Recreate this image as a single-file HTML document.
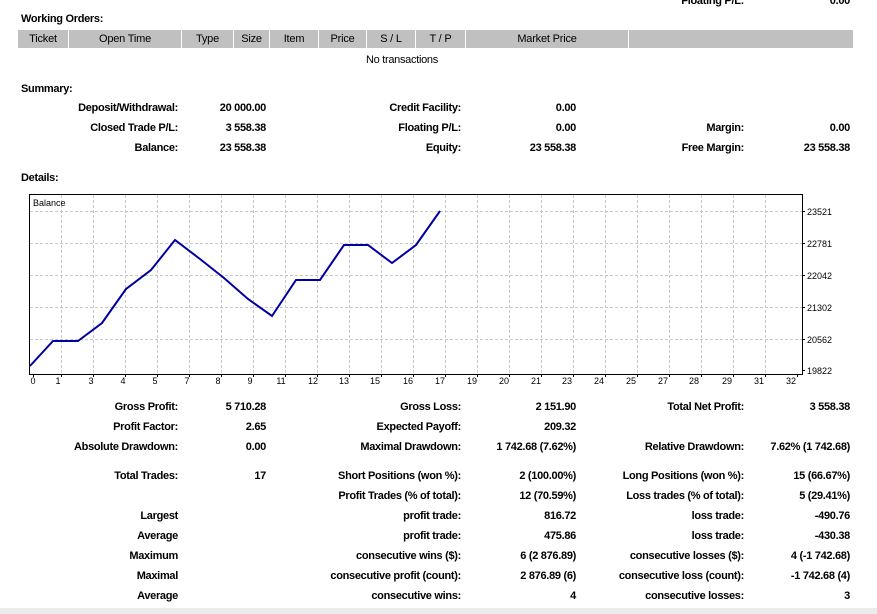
<!DOCTYPE html><html><head><style>
body{margin:0;width:877px;height:614px;background:#fff;position:relative;overflow:hidden;font-family:"Liberation Sans",Arial,sans-serif;font-size:11px;color:#000}
.t{position:absolute;white-space:nowrap;font-weight:bold;line-height:13px;letter-spacing:-0.3px;margin-top:1px}
.r{text-align:right}
.n{font-weight:normal}
.hdr{position:absolute;left:18px;top:30px;width:835px;height:18px;background:#c0c0c0}
.hdr div{position:absolute;top:0;height:18px;line-height:19px;font-size:11px;text-align:center;border-right:1px solid #fff;letter-spacing:-0.2px}
</style></head><body>
<div class="t r" style="right:133px;top:-6px">Floating P/L:</div><div class="t r" style="right:27px;top:-6px">0.00</div>
<div class="t" style="left:21px;top:12px">Working Orders:</div>
<div class="hdr">
<div style="left:0;width:50px">Ticket</div>
<div style="left:51px;width:112px">Open Time</div>
<div style="left:164px;width:51px">Type</div>
<div style="left:216px;width:35px">Size</div>
<div style="left:252px;width:48px">Item</div>
<div style="left:301px;width:47px">Price</div>
<div style="left:349px;width:48px">S / L</div>
<div style="left:398px;width:49px">T / P</div>
<div style="left:448px;width:162px">Market Price</div>
</div>
<div class="t n" style="left:366px;top:53px">No transactions</div>
<div class="t" style="left:21px;top:82px">Summary:</div>
<div class="t r" style="right:699px;top:101px">Deposit/Withdrawal:</div><div class="t r" style="right:611px;top:101px">20 000.00</div>
<div class="t r" style="right:416px;top:101px">Credit Facility:</div><div class="t r" style="right:301px;top:101px">0.00</div>
<div class="t r" style="right:699px;top:121px">Closed Trade P/L:</div><div class="t r" style="right:611px;top:121px">3 558.38</div>
<div class="t r" style="right:416px;top:121px">Floating P/L:</div><div class="t r" style="right:301px;top:121px">0.00</div>
<div class="t r" style="right:133px;top:121px">Margin:</div><div class="t r" style="right:27px;top:121px">0.00</div>
<div class="t r" style="right:699px;top:141px">Balance:</div><div class="t r" style="right:611px;top:141px">23 558.38</div>
<div class="t r" style="right:416px;top:141px">Equity:</div><div class="t r" style="right:301px;top:141px">23 558.38</div>
<div class="t r" style="right:133px;top:141px">Free Margin:</div><div class="t r" style="right:27px;top:141px">23 558.38</div>
<div class="t" style="left:21px;top:171px">Details:</div>
<svg style="position:absolute;left:0;top:0" width="877" height="392" font-family="Liberation Sans,Arial,sans-serif" font-size="9">
<g stroke="#c8c8c8" stroke-dasharray="3,2" stroke-width="1">
<line x1="30" y1="211.5" x2="802" y2="211.5"/><line x1="30" y1="243.5" x2="802" y2="243.5"/><line x1="30" y1="275.5" x2="802" y2="275.5"/><line x1="30" y1="307.5" x2="802" y2="307.5"/><line x1="30" y1="339.5" x2="802" y2="339.5"/>
<line x1="61.5" y1="195" x2="61.5" y2="374"/><line x1="93.5" y1="195" x2="93.5" y2="374"/><line x1="125.5" y1="195" x2="125.5" y2="374"/><line x1="157.5" y1="195" x2="157.5" y2="374"/><line x1="189.5" y1="195" x2="189.5" y2="374"/><line x1="221.5" y1="195" x2="221.5" y2="374"/><line x1="253.5" y1="195" x2="253.5" y2="374"/><line x1="285.5" y1="195" x2="285.5" y2="374"/><line x1="317.5" y1="195" x2="317.5" y2="374"/><line x1="349.5" y1="195" x2="349.5" y2="374"/><line x1="381.5" y1="195" x2="381.5" y2="374"/><line x1="413.5" y1="195" x2="413.5" y2="374"/><line x1="445.5" y1="195" x2="445.5" y2="374"/><line x1="477.5" y1="195" x2="477.5" y2="374"/><line x1="509.5" y1="195" x2="509.5" y2="374"/><line x1="541.5" y1="195" x2="541.5" y2="374"/><line x1="573.5" y1="195" x2="573.5" y2="374"/><line x1="605.5" y1="195" x2="605.5" y2="374"/><line x1="637.5" y1="195" x2="637.5" y2="374"/><line x1="669.5" y1="195" x2="669.5" y2="374"/><line x1="701.5" y1="195" x2="701.5" y2="374"/><line x1="733.5" y1="195" x2="733.5" y2="374"/><line x1="765.5" y1="195" x2="765.5" y2="374"/>
</g>
<rect x="29.5" y="194.5" width="773" height="180" fill="none" stroke="#000"/>
<g stroke="#000"><line x1="802" y1="211.5" x2="805" y2="211.5"/><line x1="802" y1="243.5" x2="805" y2="243.5"/><line x1="802" y1="275.5" x2="805" y2="275.5"/><line x1="802" y1="307.5" x2="805" y2="307.5"/><line x1="802" y1="339.5" x2="805" y2="339.5"/><line x1="802" y1="370.5" x2="805" y2="370.5"/></g>
<text x="33" y="206">Balance</text>
<polyline fill="none" stroke="#0000a0" stroke-width="2" points="30,366 53,341 78,341 102,323 126,289 151,270 175,240 200,259 224,278 248,299 272,316 296,280 320,280 344,245 368,245 392,263 416,245 440,211"/>
<g><text x="807" y="215">23521</text><text x="807" y="247">22781</text><text x="807" y="279">22042</text><text x="807" y="311">21302</text><text x="807" y="343">20562</text><text x="807" y="374">19822</text></g>
<g text-anchor="middle">
<text x="33" y="384">0</text><text x="58" y="384">1</text><text x="91" y="384">3</text><text x="123" y="384">4</text><text x="155" y="384">5</text><text x="187" y="384">7</text><text x="218" y="384">8</text><text x="250" y="384">9</text><text x="281" y="384">11</text><text x="313" y="384">12</text><text x="344" y="384">13</text><text x="375" y="384">15</text><text x="408" y="384">16</text><text x="440" y="384">17</text><text x="472" y="384">19</text><text x="504" y="384">20</text><text x="536" y="384">21</text><text x="567" y="384">23</text><text x="599" y="384">24</text><text x="631" y="384">25</text><text x="663" y="384">27</text><text x="694" y="384">28</text><text x="727" y="384">29</text><text x="759" y="384">31</text><text x="791" y="384">32</text>
</g>
<g stroke="#000"><line x1="33.5" y1="374" x2="33.5" y2="377"/><line x1="61.5" y1="374" x2="61.5" y2="377"/><line x1="93.5" y1="374" x2="93.5" y2="377"/><line x1="125.5" y1="374" x2="125.5" y2="377"/><line x1="157.5" y1="374" x2="157.5" y2="377"/><line x1="189.5" y1="374" x2="189.5" y2="377"/><line x1="221.5" y1="374" x2="221.5" y2="377"/><line x1="253.5" y1="374" x2="253.5" y2="377"/><line x1="285.5" y1="374" x2="285.5" y2="377"/><line x1="317.5" y1="374" x2="317.5" y2="377"/><line x1="349.5" y1="374" x2="349.5" y2="377"/><line x1="381.5" y1="374" x2="381.5" y2="377"/><line x1="413.5" y1="374" x2="413.5" y2="377"/><line x1="445.5" y1="374" x2="445.5" y2="377"/><line x1="477.5" y1="374" x2="477.5" y2="377"/><line x1="509.5" y1="374" x2="509.5" y2="377"/><line x1="541.5" y1="374" x2="541.5" y2="377"/><line x1="573.5" y1="374" x2="573.5" y2="377"/><line x1="605.5" y1="374" x2="605.5" y2="377"/><line x1="637.5" y1="374" x2="637.5" y2="377"/><line x1="669.5" y1="374" x2="669.5" y2="377"/><line x1="701.5" y1="374" x2="701.5" y2="377"/><line x1="733.5" y1="374" x2="733.5" y2="377"/><line x1="765.5" y1="374" x2="765.5" y2="377"/><line x1="797.5" y1="374" x2="797.5" y2="377"/></g>
</svg>
<div class="t r" style="right:699px;top:400px">Gross Profit:</div><div class="t r" style="right:611px;top:400px">5 710.28</div>
<div class="t r" style="right:416px;top:400px">Gross Loss:</div><div class="t r" style="right:301px;top:400px">2 151.90</div>
<div class="t r" style="right:133px;top:400px">Total Net Profit:</div><div class="t r" style="right:27px;top:400px">3 558.38</div>
<div class="t r" style="right:699px;top:420px">Profit Factor:</div><div class="t r" style="right:611px;top:420px">2.65</div>
<div class="t r" style="right:416px;top:420px">Expected Payoff:</div><div class="t r" style="right:301px;top:420px">209.32</div>
<div class="t r" style="right:699px;top:440px">Absolute Drawdown:</div><div class="t r" style="right:611px;top:440px">0.00</div>
<div class="t r" style="right:416px;top:440px">Maximal Drawdown:</div><div class="t r" style="right:301px;top:440px">1 742.68 (7.62%)</div>
<div class="t r" style="right:133px;top:440px">Relative Drawdown:</div><div class="t r" style="right:27px;top:440px">7.62% (1 742.68)</div>
<div class="t r" style="right:699px;top:469px">Total Trades:</div><div class="t r" style="right:611px;top:469px">17</div>
<div class="t r" style="right:416px;top:469px">Short Positions (won %):</div><div class="t r" style="right:301px;top:469px">2 (100.00%)</div>
<div class="t r" style="right:133px;top:469px">Long Positions (won %):</div><div class="t r" style="right:27px;top:469px">15 (66.67%)</div>
<div class="t r" style="right:416px;top:489px">Profit Trades (% of total):</div><div class="t r" style="right:301px;top:489px">12 (70.59%)</div>
<div class="t r" style="right:133px;top:489px">Loss trades (% of total):</div><div class="t r" style="right:27px;top:489px">5 (29.41%)</div>
<div class="t r" style="right:699px;top:509px">Largest</div>
<div class="t r" style="right:416px;top:509px">profit trade:</div><div class="t r" style="right:301px;top:509px">816.72</div>
<div class="t r" style="right:133px;top:509px">loss trade:</div><div class="t r" style="right:27px;top:509px">-490.76</div>
<div class="t r" style="right:699px;top:529px">Average</div>
<div class="t r" style="right:416px;top:529px">profit trade:</div><div class="t r" style="right:301px;top:529px">475.86</div>
<div class="t r" style="right:133px;top:529px">loss trade:</div><div class="t r" style="right:27px;top:529px">-430.38</div>
<div class="t r" style="right:699px;top:549px">Maximum</div>
<div class="t r" style="right:416px;top:549px">consecutive wins ($):</div><div class="t r" style="right:301px;top:549px">6 (2 876.89)</div>
<div class="t r" style="right:133px;top:549px">consecutive losses ($):</div><div class="t r" style="right:27px;top:549px">4 (-1 742.68)</div>
<div class="t r" style="right:699px;top:569px">Maximal</div>
<div class="t r" style="right:416px;top:569px">consecutive profit (count):</div><div class="t r" style="right:301px;top:569px">2 876.89 (6)</div>
<div class="t r" style="right:133px;top:569px">consecutive loss (count):</div><div class="t r" style="right:27px;top:569px">-1 742.68 (4)</div>
<div class="t r" style="right:699px;top:589px">Average</div>
<div class="t r" style="right:416px;top:589px">consecutive wins:</div><div class="t r" style="right:301px;top:589px">4</div>
<div class="t r" style="right:133px;top:589px">consecutive losses:</div><div class="t r" style="right:27px;top:589px">3</div>
<div style="position:absolute;left:0;top:608px;width:877px;height:6px;background:#ececec"></div>
</body></html>
